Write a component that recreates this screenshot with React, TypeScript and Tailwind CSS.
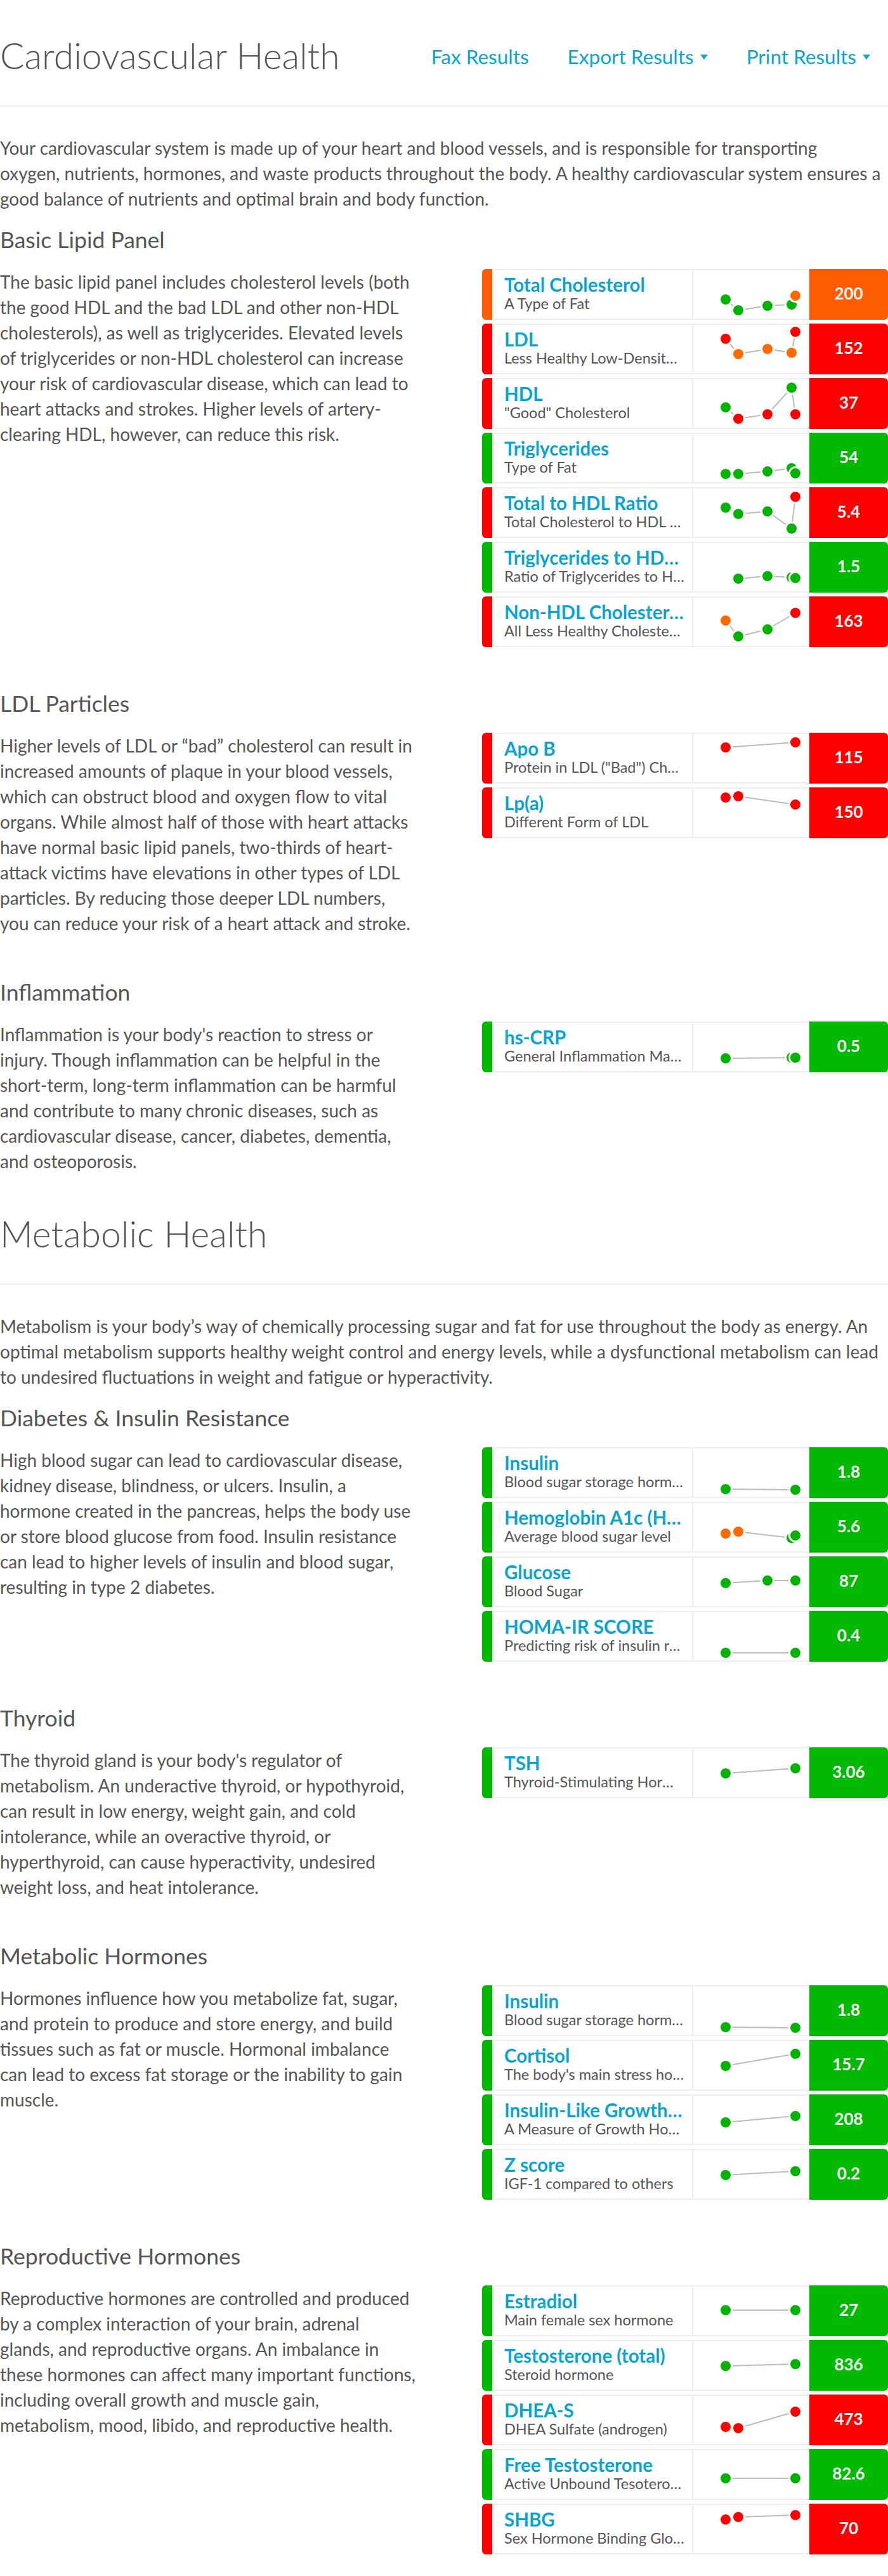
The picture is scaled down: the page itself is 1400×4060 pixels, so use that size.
import React from 'react'

type Pt = [number, number, 'g' | 'o' | 'r']

type Metric = {
  name: string
  sub: string
  value: string
  status: 'g' | 'o' | 'r'
  pts: Pt[]
}

const DOT: Record<string, string> = { g: '#00b300', o: '#ff6a00', r: '#ff0000' }
const BAR: Record<string, string> = { g: 'bg-[#00b900]', o: 'bg-[#ff5b00]', r: 'bg-[#ff0000]' }

function Spark({ pts }: { pts: Pt[] }) {
  return (
    <svg width="183" height="76" className="block">
      {pts.slice(1).map((p, i) => (
        <line key={i} x1={pts[i][0] - 1} y1={pts[i][1] - 2} x2={p[0] - 1} y2={p[1] - 2} stroke="#bbbbbb" strokeWidth="2" />
      ))}
      {pts.map((p, i) => (
        <circle key={i} cx={p[0] - 1} cy={p[1] - 2} r="9.5" fill={DOT[p[2]]} stroke="#fff" strokeWidth="3" />
      ))}
    </svg>
  )
}

function Card({ m }: { m: Metric }) {
  return (
    <div className="flex h-[80px] rounded-[6px] overflow-hidden">
      <div className={`w-[16px] shrink-0 ${BAR[m.status]}`} />
      <div className="flex flex-1 border-y-2 border-l-2 border-[#eeeeee] bg-white">
        <div className="w-[315px] shrink-0 border-r-2 border-[#eeeeee] pl-[17px] pr-[12px] pt-[7px] min-w-0">
          <div className="truncate text-[29.5px] leading-[31px] font-bold text-[#0ba4cf]">{m.name}</div>
          <div className="truncate text-[23.5px] leading-[27px] mt-[1px] text-[#555]">{m.sub}</div>
        </div>
        <div className="flex-1">
          <Spark pts={m.pts} />
        </div>
      </div>
      <div className={`w-[124px] shrink-0 flex items-center justify-center pb-[4px] text-white text-[26px] font-bold ${BAR[m.status]}`}>
        {m.value}
      </div>
    </div>
  )
}

function Caret() {
  return (
    <svg width="12" height="8" viewBox="0 0 12 8" className="ml-[10px] inline-block">
      <polygon points="0,0 12,0 6,8" fill="#0ba4cf" />
    </svg>
  )
}

function Lines({ lines }: { lines: string[] }) {
  return (
    <>
      {lines.map((l, i) => <span key={i} className="block whitespace-nowrap">{l}</span>)}
    </>
  )
}

function SectionTitle({ title, links }: { title: string; links?: boolean }) {
  return (
    <div className="flex items-center justify-between h-[60px]">
      <h1 className="text-[57px] leading-[60px] font-light text-[#555]">{title}</h1>
      {links && (
        <div className="flex items-center gap-[61px] pr-[28px] mt-[6px] text-[31.5px] text-[#0ba4cf]">
          <span>Fax Results</span>
          <span className="flex items-center">Export Results<Caret /></span>
          <span className="flex items-center">Print Results<Caret /></span>
        </div>
      )}
    </div>
  )
}

function Sub({ title, text, items, first }: { title: string; text: string[]; items: Metric[]; first?: boolean }) {
  return (
    <div>
      <h2 className={`${first ? 'mt-[25px]' : 'mt-[69px]'} text-[35.5px] leading-[40px] text-[#555]`}>{title}</h2>
      <div className="mt-[26px] flex gap-[30px]">
        <p className="w-[730px] shrink-0 text-[28px] leading-[40px]"><Lines lines={text} /></p>
        <div className="w-[640px] flex flex-col gap-[6px]">
          {items.map((m) => <Card key={m.name} m={m} />)}
        </div>
      </div>
    </div>
  )
}

const lipid: Metric[] = [
  { name: 'Total Cholesterol', sub: 'A Type of Fat', value: '200', status: 'o', pts: [[52, 48, 'g'], [72, 65, 'g'], [118, 58, 'g'], [156, 56, 'g'], [162, 42, 'o']] },
  { name: 'LDL', sub: 'Less Healthy Low-Density Lipoprotein', value: '152', status: 'r', pts: [[52, 24, 'r'], [72, 48, 'o'], [118, 40, 'o'], [156, 46, 'o'], [162, 13, 'r']] },
  { name: 'HDL', sub: '"Good" Cholesterol', value: '37', status: 'r', pts: [[52, 46, 'g'], [72, 64, 'r'], [118, 57, 'r'], [156, 15, 'g'], [162, 57, 'r']] },
  { name: 'Triglycerides', sub: 'Type of Fat', value: '54', status: 'g', pts: [[52, 65, 'g'], [72, 65, 'g'], [118, 61, 'g'], [156, 56, 'g'], [162, 64, 'g']] },
  { name: 'Total to HDL Ratio', sub: 'Total Cholesterol to HDL Ratio', value: '5.4', status: 'r', pts: [[52, 32, 'g'], [72, 42, 'g'], [118, 38, 'g'], [156, 65, 'g'], [162, 15, 'r']] },
  { name: 'Triglycerides to HDL Ratio', sub: 'Ratio of Triglycerides to HDL', value: '1.5', status: 'g', pts: [[72, 58, 'g'], [118, 54, 'g'], [156, 56, 'g'], [162, 57, 'g']] },
  { name: 'Non-HDL Cholesterol', sub: 'All Less Healthy Cholesterol', value: '163', status: 'r', pts: [[52, 38, 'o'], [72, 63, 'g'], [118, 52, 'g'], [162, 26, 'r']] },
]

const ldl: Metric[] = [
  { name: 'Apo B', sub: 'Protein in LDL ("Bad") Cholesterol', value: '115', status: 'r', pts: [[52, 23, 'r'], [162, 15, 'r']] },
  { name: 'Lp(a)', sub: 'Different Form of LDL', value: '150', status: 'r', pts: [[52, 16, 'r'], [72, 14, 'r'], [162, 27, 'r']] },
]

const inflam: Metric[] = [
  { name: 'hs-CRP', sub: 'General Inflammation Marker', value: '0.5', status: 'g', pts: [[52, 58, 'g'], [156, 57, 'g'], [162, 57, 'g']] },
]

const diabetes: Metric[] = [
  { name: 'Insulin', sub: 'Blood sugar storage hormone', value: '1.8', status: 'g', pts: [[52, 66, 'g'], [162, 67, 'g']] },
  { name: 'Hemoglobin A1c (HbA1c)', sub: 'Average blood sugar level', value: '5.6', status: 'g', pts: [[52, 50, 'o'], [72, 47, 'o'], [156, 57, 'g'], [162, 53, 'g']] },
  { name: 'Glucose', sub: 'Blood Sugar', value: '87', status: 'g', pts: [[52, 42, 'g'], [118, 38, 'g'], [162, 38, 'g']] },
  { name: 'HOMA-IR SCORE', sub: 'Predicting risk of insulin resistance', value: '0.4', status: 'g', pts: [[52, 66, 'g'], [162, 66, 'g']] },
]

const thyroid: Metric[] = [
  { name: 'TSH', sub: 'Thyroid-Stimulating Hormone', value: '3.06', status: 'g', pts: [[52, 41, 'g'], [162, 33, 'g']] },
]

const hormones: Metric[] = [
  { name: 'Insulin', sub: 'Blood sugar storage hormone', value: '1.8', status: 'g', pts: [[52, 66, 'g'], [162, 67, 'g']] },
  { name: 'Cortisol', sub: "The body's main stress hormone", value: '15.7', status: 'g', pts: [[52, 41, 'g'], [162, 22, 'g']] },
  { name: 'Insulin-Like Growth Factor', sub: 'A Measure of Growth Hormone', value: '208', status: 'g', pts: [[52, 44, 'g'], [162, 34, 'g']] },
  { name: 'Z score', sub: 'IGF-1 compared to others', value: '0.2', status: 'g', pts: [[52, 41, 'g'], [162, 35, 'g']] },
]

const repro: Metric[] = [
  { name: 'Estradiol', sub: 'Main female sex hormone', value: '27', status: 'g', pts: [[52, 39, 'g'], [162, 39, 'g']] },
  { name: 'Testosterone (total)', sub: 'Steroid hormone', value: '836', status: 'g', pts: [[52, 41, 'g'], [162, 38, 'g']] },
  { name: 'DHEA-S', sub: 'DHEA Sulfate (androgen)', value: '473', status: 'r', pts: [[52, 51, 'r'], [72, 53, 'r'], [162, 27, 'r']] },
  { name: 'Free Testosterone', sub: 'Active Unbound Tesoterone', value: '82.6', status: 'g', pts: [[52, 46, 'g'], [162, 46, 'g']] },
  { name: 'SHBG', sub: 'Sex Hormone Binding Globulin', value: '70', status: 'r', pts: [[52, 25, 'r'], [72, 21, 'r'], [162, 18, 'r']] },
]

export default function App() {
  return (
    <div className="w-[1400px] bg-white pt-[57px] pb-[35px] text-[#555] font-[Lato,'Liberation_Sans',sans-serif]">
      {/* Cardiovascular */}
      <SectionTitle title="Cardiovascular Health" links />
      <div className="mt-[49px] h-[2px] bg-[#eeeeee]" />
      <p className="mt-[45px] text-[28px] leading-[40px]">
        <Lines lines={[
          'Your cardiovascular system is made up of your heart and blood vessels, and is responsible for transporting',
          'oxygen, nutrients, hormones, and waste products throughout the body. A healthy cardiovascular system ensures a',
          'good balance of nutrients and optimal brain and body function.',
        ]} />
      </p>
      <Sub first title="Basic Lipid Panel" items={lipid} text={[
        'The basic lipid panel includes cholesterol levels (both',
        'the good HDL and the bad LDL and other non-HDL',
        'cholesterols), as well as triglycerides. Elevated levels',
        'of triglycerides or non-HDL cholesterol can increase',
        'your risk of cardiovascular disease, which can lead to',
        'heart attacks and strokes. Higher levels of artery-',
        'clearing HDL, however, can reduce this risk.',
      ]} />
      <Sub title="LDL Particles" items={ldl} text={[
        'Higher levels of LDL or “bad” cholesterol can result in',
        'increased amounts of plaque in your blood vessels,',
        'which can obstruct blood and oxygen flow to vital',
        'organs. While almost half of those with heart attacks',
        'have normal basic lipid panels, two-thirds of heart-',
        'attack victims have elevations in other types of LDL',
        'particles. By reducing those deeper LDL numbers,',
        'you can reduce your risk of a heart attack and stroke.',
      ]} />
      <Sub title="Inflammation" items={inflam} text={[
        "Inflammation is your body's reaction to stress or",
        'injury. Though inflammation can be helpful in the',
        'short-term, long-term inflammation can be harmful',
        'and contribute to many chronic diseases, such as',
        'cardiovascular disease, cancer, diabetes, dementia,',
        'and osteoporosis.',
      ]} />

      {/* Metabolic */}
      <div className="mt-[64px]">
        <SectionTitle title="Metabolic Health" />
      </div>
      <div className="mt-[49px] h-[2px] bg-[#eeeeee]" />
      <p className="mt-[45px] text-[28px] leading-[40px]">
        <Lines lines={[
          'Metabolism is your body’s way of chemically processing sugar and fat for use throughout the body as energy. An',
          'optimal metabolism supports healthy weight control and energy levels, while a dysfunctional metabolism can lead',
          'to undesired fluctuations in weight and fatigue or hyperactivity.',
        ]} />
      </p>
      <Sub first title="Diabetes & Insulin Resistance" items={diabetes} text={[
        'High blood sugar can lead to cardiovascular disease,',
        'kidney disease, blindness, or ulcers. Insulin, a',
        'hormone created in the pancreas, helps the body use',
        'or store blood glucose from food. Insulin resistance',
        'can lead to higher levels of insulin and blood sugar,',
        'resulting in type 2 diabetes.',
      ]} />
      <Sub title="Thyroid" items={thyroid} text={[
        "The thyroid gland is your body's regulator of",
        'metabolism. An underactive thyroid, or hypothyroid,',
        'can result in low energy, weight gain, and cold',
        'intolerance, while an overactive thyroid, or',
        'hyperthyroid, can cause hyperactivity, undesired',
        'weight loss, and heat intolerance.',
      ]} />
      <Sub title="Metabolic Hormones" items={hormones} text={[
        'Hormones influence how you metabolize fat, sugar,',
        'and protein to produce and store energy, and build',
        'tissues such as fat or muscle. Hormonal imbalance',
        'can lead to excess fat storage or the inability to gain',
        'muscle.',
      ]} />
      <Sub title="Reproductive Hormones" items={repro} text={[
        'Reproductive hormones are controlled and produced',
        'by a complex interaction of your brain, adrenal',
        'glands, and reproductive organs. An imbalance in',
        'these hormones can affect many important functions,',
        'including overall growth and muscle gain,',
        'metabolism, mood, libido, and reproductive health.',
      ]} />
    </div>
  )
}
